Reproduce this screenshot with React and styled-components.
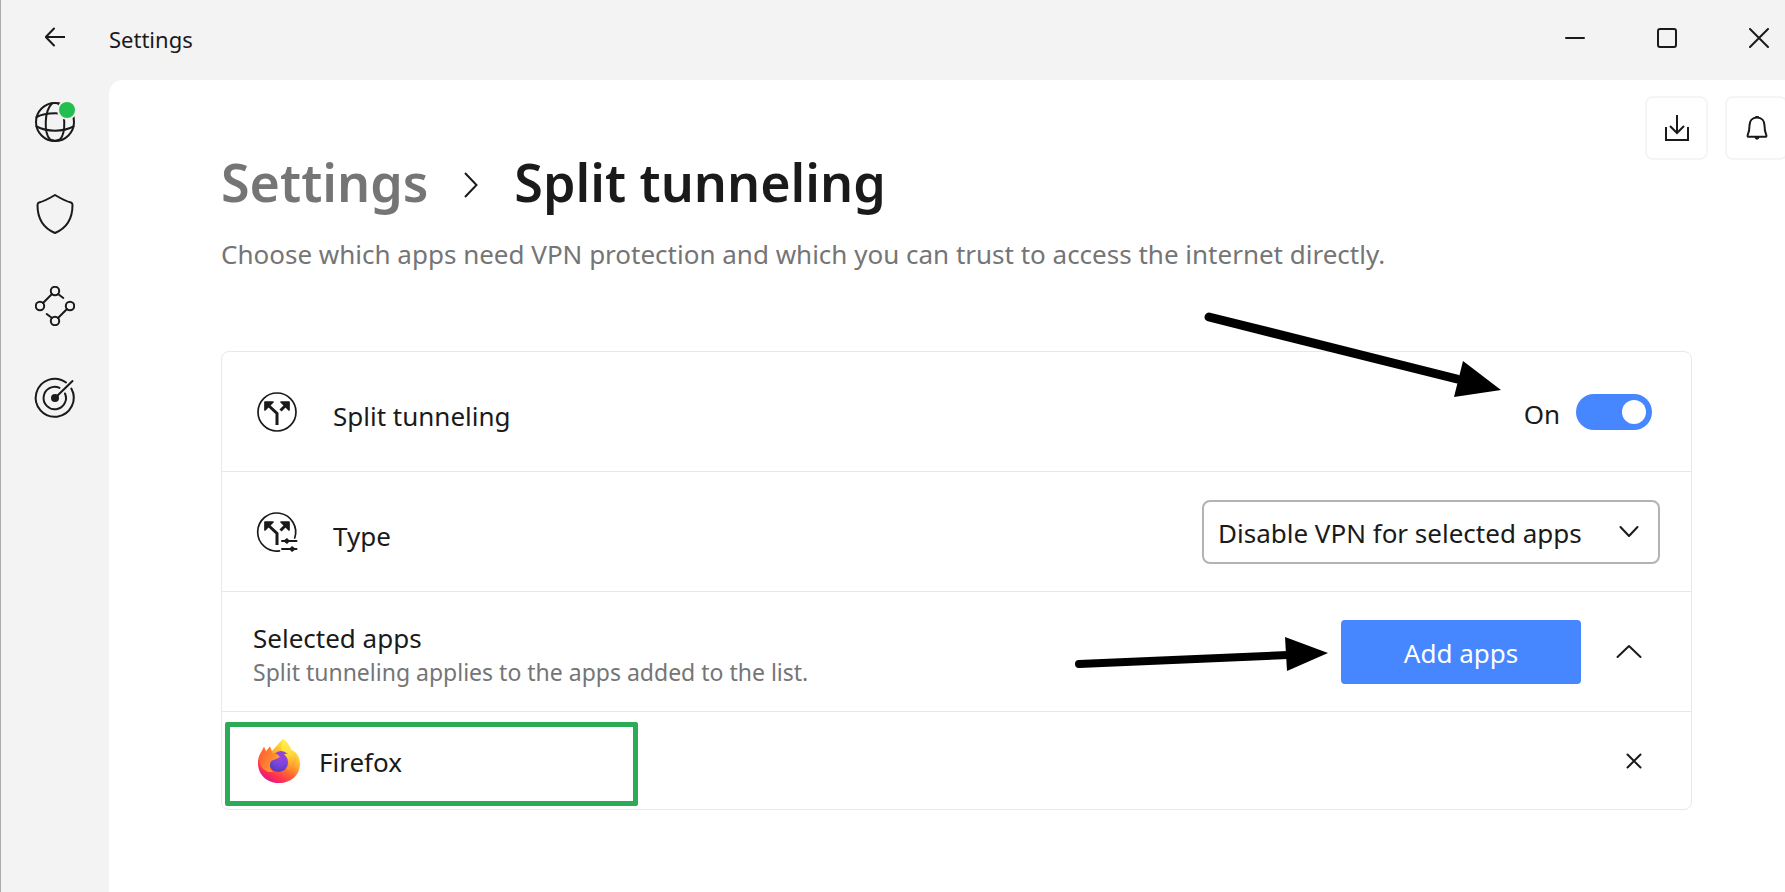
import React, { useState } from "react";
import styled, { createGlobalStyle } from "styled-components";

const GlobalStyle = createGlobalStyle`
  *, *::before, *::after { box-sizing: border-box; }
  body {
    margin: 0;
    background: #f3f3f3;
    color: #1a1a1a;
    font-family: "Noto Sans", "Open Sans", sans-serif;
    font-size: 26px;
    line-height: 36px;
  }
  button, input, select { font: inherit; color: inherit; margin: 0; }
  svg { display: block; flex: none; }
`;

const Window = styled.div`
  min-height: 100vh;
  display: grid;
  grid-template: 80px 1fr / 108px minmax(0, 1fr);
  border-left: 1px solid #aaaaaa;
  overflow: hidden;
`;

const TitleBar = styled.header`
  grid-column: 1 / -1;
  display: grid;
  grid-template-columns: 108px 1fr auto;
  align-items: start;
`;

const PlainButton = styled.button`
  display: flex;
  align-items: center;
  justify-content: center;
  padding: 0;
  border: 0;
  background: none;
  cursor: pointer;
`;

const BackButton = styled(PlainButton)`
  height: 74px;
`;

const WindowTitle = styled.span`
  padding-top: 23px;
  font-size: 22px;
  line-height: 32px;
`;

const WindowControls = styled.div`
  display: flex;
  gap: 40px;
`;

const WindowButton = styled(PlainButton)`
  width: 52px;
  height: 76px;
`;

const Sidebar = styled.nav`
  display: flex;
  flex-direction: column;
  align-items: center;
  gap: 40px;
  padding-top: 16px;
`;

const NavLink = styled.a`
  display: flex;
  align-items: center;
  justify-content: center;
  width: 52px;
  height: 52px;
  color: inherit;
`;

const Panel = styled.main`
  background: #ffffff;
  border-top-left-radius: 14px;
  overflow: hidden;
`;

const Actions = styled.div`
  display: flex;
  justify-content: flex-end;
  gap: 17px;
  padding-top: 16px;
  margin-right: -3px;
`;

const ActionButton = styled(PlainButton)`
  width: 63px;
  height: 64px;
  border: 2px solid #f5f5f5;
  border-radius: 8px;
`;

const Content = styled.div`
  padding: 0 93px 40px 112px;
  margin-top: -16px;
`;

const Breadcrumb = styled.h1`
  display: flex;
  align-items: center;
  gap: 34px;
  margin: 0;
  font-size: 52px;
  line-height: 76px;
  font-weight: 600;
`;

const ParentLink = styled.a`
  color: #757575;
  text-decoration: none;
`;

const Description = styled.p`
  margin: 16px 0 0;
  color: #757575;
`;

const Card = styled.section`
  margin-top: 79px;
  border: 1px solid #e8e8e8;
  border-radius: 8px;
`;

const Row = styled.div`
  position: relative;
  display: flex;
  align-items: center;
  height: ${(p) => (p.$compact ? "97px" : "120px")};
  padding: 0 31px 0 ${(p) => (p.$flush ? "31px" : "35px")};
  border-bottom: ${(p) => (p.$compact ? "0" : "1px solid #e8e8e8")};
`;

const RowLabel = styled.label`
  flex: 1;
  padding-top: 8px;
  margin-left: 36px;
`;

const RowText = styled.div`
  flex: 1;
  padding-top: 4px;
`;

const RowTitle = styled.h2`
  margin: 0;
  font-size: 26px;
  line-height: 36px;
  font-weight: 400;
`;

const RowHint = styled.p`
  margin: 0;
  font-size: 23px;
  line-height: 32px;
  color: #757575;
`;

const SwitchState = styled.span`
  padding-top: 4px;
  margin-right: 16px;
`;

const Switch = styled.input`
  appearance: none;
  display: flex;
  align-items: center;
  width: 76px;
  height: 36px;
  padding: 0 6px;
  margin-right: 8px;
  border-radius: 18px;
  background: ${(p) => (p.checked ? "#4687ff" : "#8a8a8a")};
  cursor: pointer;

  &::before {
    content: "";
    width: 24px;
    height: 24px;
    margin-left: ${(p) => (p.checked ? "auto" : "0")};
    border-radius: 50%;
    background: #ffffff;
  }
`;

const SelectBox = styled.div`
  display: grid;
  align-items: center;
  > * { grid-area: 1 / 1; }
  > svg { justify-self: end; margin-right: 21px; pointer-events: none; }
`;

const Select = styled.select`
  appearance: none;
  width: 458px;
  height: 64px;
  padding: 2px 14px 0;
  border: 2px solid #b3b3b3;
  border-radius: 8px;
  background: #ffffff;
`;

const PrimaryButton = styled.button`
  width: 240px;
  height: 64px;
  padding: 2px 0 0;
  border: 0;
  border-radius: 4px;
  background: #4687ff;
  color: #ffffff;
  cursor: pointer;
`;

const ExpandButton = styled(PlainButton)`
  width: 48px;
  height: 48px;
  margin: 0 7px 0 24px;
`;

const RemoveButton = styled(PlainButton)`
  width: 40px;
  height: 40px;
  margin-right: 6px;
`;

const AppName = styled.span`
  flex: 1;
  margin-left: 18px;
  padding-top: 2px;
`;

const Highlight = styled.div`
  position: absolute;
  left: 3px;
  top: 10px;
  width: 413px;
  height: 84px;
  border: 5px solid #2bab55;
  border-radius: 2px;
  pointer-events: none;
`;

const Pointer = styled.svg`
  position: absolute;
  right: ${(p) => p.$right}px;
  top: ${(p) => p.$top}px;
  pointer-events: none;
`;

function Icon({ size = 40, weight = 2, children, ...rest }) {
  return (
    <svg width={size} height={size} viewBox={`0 0 ${size} ${size}`} fill="none" stroke="currentColor"
      strokeWidth={weight} strokeLinecap="round" strokeLinejoin="round" aria-hidden="true" {...rest}>
      {children}
    </svg>
  );
}

const BackIcon = () => (
  <Icon size={20}><path d="M19.5 10H1M9 1.5L.8 10 9 18.5" /></Icon>
);

const GlobeIcon = () => (
  <Icon overflow="visible">
    <circle cx="20" cy="20" r="19" />
    <path d="M17 1.500C9 9 9 31 15 37.500Q20 40 25 37.500C31 31 31 9 23 1.500" />
    <path d="M1.500 15C11 10 29 10 38.500 15M1.500 24.500C12 30 28 30 38.500 24.500" />
    <circle cx="32" cy="8" r="10" fill="#f3f3f3" stroke="none" />
    <circle cx="32" cy="8" r="8" fill="#22bf50" stroke="none" />
  </Icon>
);

const ShieldIcon = () => (
  <Icon><path d="M20 1Q10 7 4 8.500Q2.500 9 2.500 11C2.500 24 8 34 20 39C32 34 37.500 24 37.500 11Q37.500 9 36 8.500Q30 7 20 1Z" /></Icon>
);

const NodesIcon = () => (
  <Icon>
    <circle cx="20" cy="5" r="4.200" /><circle cx="5" cy="20" r="4.200" />
    <circle cx="35" cy="20" r="4.200" /><circle cx="20" cy="35" r="4.200" />
    <path d="M17 8L8 17M23 8L28.300 12M32 23L23 32M17 32L11.700 28" />
  </Icon>
);

const RadarIcon = () => (
  <Icon overflow="visible">
    <path d="M31 4.500A19 19 0 1 0 36.300 10.500" />
    <path d="M24.500 9.900A11.200 11.200 0 1 0 30 15.500" />
    <path d="M20 20L37.500 3" />
    <circle cx="20" cy="20" r="4" fill="currentColor" stroke="none" />
  </Icon>
);

const MinimizeIcon = () => <Icon size={20}><path d="M1 10H19" /></Icon>;
const MaximizeIcon = () => <Icon size={20}><rect x="1" y="1" width="18" height="18" rx="2" /></Icon>;
const CloseIcon = () => <Icon size={20}><path d="M1 1L19 19M19 1L1 19" /></Icon>;

const DownloadIcon = () => (
  <Icon size={26} strokeLinecap="butt" strokeLinejoin="miter">
    <path d="M2 12V25H24V12M13 0V17M6 11L13 18L20 11" />
  </Icon>
);

const BellIcon = () => (
  <Icon size={26}>
    <path d="M13 2.500C8 2.500 5.500 6 5.500 10.500C5.500 16 4.800 17.500 3.700 20Q3 21.800 5 21.800H21Q23 21.800 22.300 20C21.200 17.500 20.500 16 20.500 10.500C20.500 6 18 2.500 13 2.500Z" />
    <path d="M11.500 22.500Q13 25 14.500 22.500ZM12 2H14" />
  </Icon>
);

const ForwardIcon = () => (
  <svg width="18" height="32" viewBox="0 0 18 32" fill="none" stroke="#1a1a1a" strokeWidth="2" aria-hidden="true">
    <path d="M3 7L14.500 19L3 31" />
  </svg>
);

const forkArms = (
  <>
    <path d="M20 33V21.500L11 13M23.500 18.500L29 13" strokeWidth="3" strokeLinecap="butt" strokeLinejoin="miter" />
    <path d="M8 10H16L8 18ZM32 10H24L32 18Z" fill="currentColor" />
  </>
);

const SplitIcon = () => (
  <Icon weight={1.7}>
    <circle cx="20" cy="20" r="19" />
    {forkArms}
  </Icon>
);

const SplitTypeIcon = () => (
  <Icon weight={1.700} overflow="visible">
    <path d="M22.500 38.800A19 19 0 1 1 37.700 26" />
    {forkArms}
    <path d="M25 29H39.500M25 37H39.500" strokeWidth="2" />
    <path d="M26 29L30 26L33 29L30 32ZM39 37L35 34L32 37L35 40Z" fill="currentColor" stroke="none" />
  </Icon>
);

const ChevronDown = () => (
  <Icon size={20}><path d="M1.500 5L10 14L18.500 5" /></Icon>
);
const ChevronUp = () => (
  <Icon size={26}><path d="M1.500 18L13 7L24.500 18" /></Icon>
);
const RemoveIcon = () => (
  <Icon size={16}><path d="M1.500 1.500L14.500 14.500M14.500 1.500L1.500 14.500" /></Icon>
);

const FirefoxIcon = () => (
  <svg width="44" height="44" viewBox="0 0 44 44" aria-hidden="true">
    <defs>
      <linearGradient id="fx-body" x1="0.85" y1="0.1" x2="0.3" y2="1">
        <stop offset="0" stopColor="#fff04a" />
        <stop offset="0.35" stopColor="#ffb62e" />
        <stop offset="0.6" stopColor="#ff6a32" />
        <stop offset="0.82" stopColor="#ff3150" />
        <stop offset="1" stopColor="#e31587" />
      </linearGradient>
      <linearGradient id="fx-tail" x1="0.4" y1="0" x2="0.5" y2="1">
        <stop offset="0" stopColor="#fff34f" />
        <stop offset="0.5" stopColor="#ffd93c" />
        <stop offset="1" stopColor="#ff8a2d" />
      </linearGradient>
      <radialGradient id="fx-globe" cx="0.6" cy="0.2" r="0.9">
        <stop offset="0" stopColor="#a43ee8" />
        <stop offset="0.5" stopColor="#7646db" />
        <stop offset="1" stopColor="#4d37a8" />
      </radialGradient>
      <linearGradient id="fx-head" x1="0" y1="0.2" x2="1" y2="0.8">
        <stop offset="0" stopColor="#ff5a36" />
        <stop offset="1" stopColor="#ffae2c" />
      </linearGradient>
    </defs>
    <path fill="url(#fx-body)" d="M26 0C29 2 33 7 34 11C39 12 43 18 43 25C43 36 34 44 22 44C10 44 1 36 1 24C1 17 4 13 7 8L9 12L13 7.500L15 12C18 9 21 5 26 0Z" />
    <path fill="url(#fx-tail)" d="M26 0C25 6 23 8 25 12C31 17 34 24 30 31C34 31 39 27 39 20C39 16 37 13 34 11C33 7 29 2 26 0Z" />
    <circle cx="21.500" cy="23.500" r="9.500" fill="url(#fx-globe)" />
    <path fill="#8c45d8" d="M17 15Q24 9 31 15Q28 14 27 16Q31 19 30 24Q27 17 18 18Z" />
    <path fill="url(#fx-head)" d="M2.500 19Q5 12 7 8L9 13L13 7.500L15 14Q18 13.500 20 15Q22 16.500 23 18Q20 20 16.500 21Q13 22 13 26Q12 30 16 33C8 34 2 28 2.500 19Z" />
  </svg>
);

const navItems = [
  ["VPN", GlobeIcon],
  ["Threat protection", ShieldIcon],
  ["Mesh network", NodesIcon],
  ["Monitor", RadarIcon],
];

export default function App() {
  const [enabled, setEnabled] = useState(true);

  return (
    <>
      <GlobalStyle />
      <Window>
        <TitleBar>
          <BackButton aria-label="Back"><BackIcon /></BackButton>
          <WindowTitle>Settings</WindowTitle>
          <WindowControls>
            <WindowButton aria-label="Minimize"><MinimizeIcon /></WindowButton>
            <WindowButton aria-label="Maximize"><MaximizeIcon /></WindowButton>
            <WindowButton aria-label="Close"><CloseIcon /></WindowButton>
          </WindowControls>
        </TitleBar>

        <Sidebar>
          {navItems.map(([name, Glyph]) => (
            <NavLink key={name} href="#" aria-label={name}><Glyph /></NavLink>
          ))}
        </Sidebar>

        <Panel>
          <Actions>
            <ActionButton aria-label="Downloads"><DownloadIcon /></ActionButton>
            <ActionButton aria-label="Notifications"><BellIcon /></ActionButton>
          </Actions>
          <Content>
            <Breadcrumb>
              <ParentLink href="#">Settings</ParentLink>
              <ForwardIcon />
              <span>Split tunneling</span>
            </Breadcrumb>
            <Description>
              Choose which apps need VPN protection and which you can trust to access the internet directly.
            </Description>

            <Card>
              <Row>
                <SplitIcon />
                <RowLabel htmlFor="split">Split tunneling</RowLabel>
                <SwitchState>{enabled ? "On" : "Off"}</SwitchState>
                <Switch id="split" type="checkbox" role="switch" checked={enabled}
                  onChange={(e) => setEnabled(e.target.checked)} />
                <Pointer $right={190} $top={-41} width="298" height="92" viewBox="0 0 298 92" aria-hidden="true">
                  <path d="M6 6L254 68" stroke="#000" strokeWidth="9" strokeLinecap="round" />
                  <path d="M260 50L298 79L251 86Z" />
                </Pointer>
              </Row>
              <Row>
                <SplitTypeIcon />
                <RowLabel htmlFor="type">Type</RowLabel>
                <SelectBox>
                  <Select id="type">
                    <option>Disable VPN for selected apps</option>
                    <option>Enable VPN for selected apps</option>
                  </Select>
                  <ChevronDown />
                </SelectBox>
              </Row>
              <Row $flush>
                <RowText>
                  <RowTitle>Selected apps</RowTitle>
                  <RowHint>Split tunneling applies to the apps added to the list.</RowHint>
                </RowText>
                <PrimaryButton>Add apps</PrimaryButton>
                <ExpandButton aria-label="Collapse list"><ChevronUp /></ExpandButton>
                <Pointer $right={363} $top={44} width="254" height="36" viewBox="0 0 254 36" aria-hidden="true">
                  <path d="M5 28L214 19" stroke="#000" strokeWidth="8" strokeLinecap="round" />
                  <path d="M211 1L254 17L213 35Z" />
                </Pointer>
              </Row>
              <Row $compact>
                <FirefoxIcon />
                <AppName>Firefox</AppName>
                <RemoveButton aria-label="Remove Firefox"><RemoveIcon /></RemoveButton>
                <Highlight />
              </Row>
            </Card>
          </Content>
        </Panel>
      </Window>
    </>
  );
}
